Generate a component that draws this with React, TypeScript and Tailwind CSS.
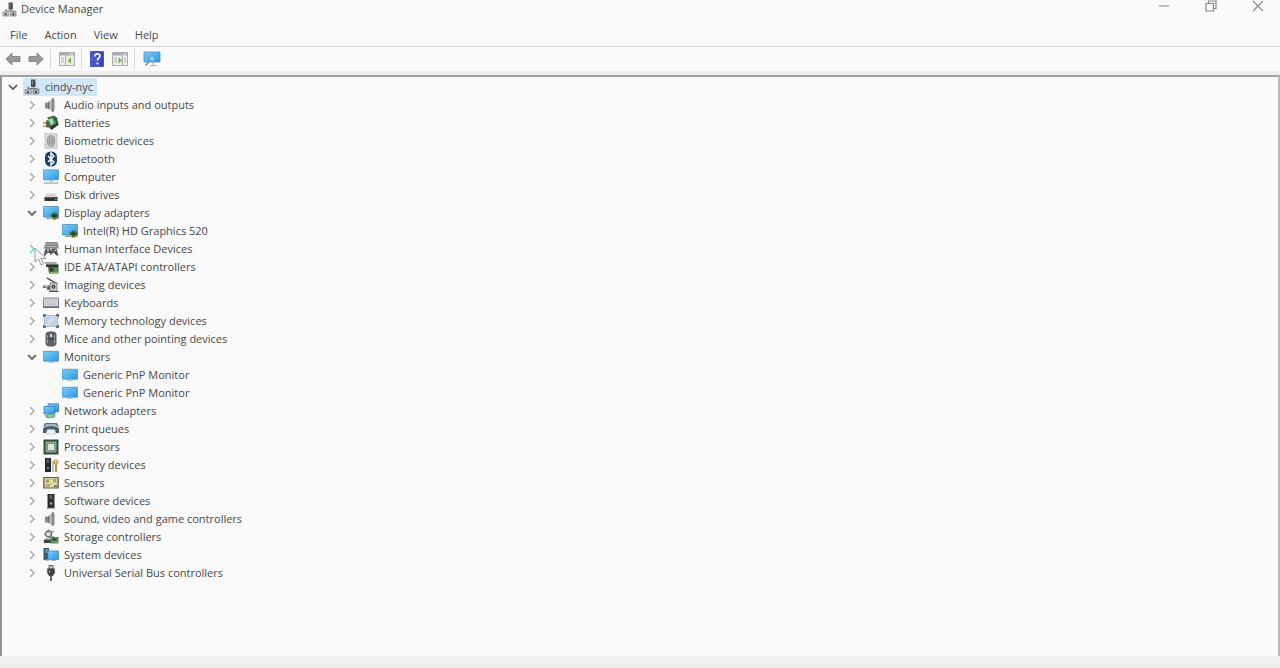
import { useState, type ReactNode } from "react";

function Icon({ children, className = "size-4" }: { children: ReactNode; className?: string }) {
  return (
    <svg viewBox="0 0 16 16" className={`${className} shrink-0`} fill="none" aria-hidden="true">
      {children}
    </svg>
  );
}

function Gradients() {
  return (
    <svg className="absolute size-0" aria-hidden="true">
      <defs>
        <linearGradient id="screen" x1="0" y1="0" x2="1" y2="1">
          <stop offset="0" stopColor="#86cbf4" />
          <stop offset="0.5" stopColor="#56b2ef" />
          <stop offset="1" stopColor="#2f93e0" />
        </linearGradient>
        <linearGradient id="metal" x1="0" y1="0" x2="1" y2="0">
          <stop offset="0" stopColor="#555" />
          <stop offset="0.5" stopColor="#c4c4c4" />
          <stop offset="1" stopColor="#777" />
        </linearGradient>
        <linearGradient id="help" x1="0" y1="0" x2="1" y2="0">
          <stop offset="0" stopColor="#2b3190" />
          <stop offset="0.3" stopColor="#4a58d0" />
          <stop offset="1" stopColor="#3642b4" />
        </linearGradient>
      </defs>
    </svg>
  );
}

function DeviceIcon({ className }: { className?: string }) {
  return (
    <Icon className={className}>
      <path d="M7 0.5h4.5V8H7z" fill="#454b4e" />
      <path d="M8 1.5h1v4H8z" fill="#79a09d" />
      <path d="M9.2 7v3M4 12V9.5h9V12" stroke="#777" strokeWidth="1" />
      <path d="M1 10.500h6.500V15H1z" fill="#b9bbbd" stroke="#8b8d90" strokeWidth=".7" />
      <path d="M9 10h6v5H9z" fill="#a7aaad" stroke="#85888b" strokeWidth=".7" />
      <path d="M3 12.2h2v2H3zM11 12h2v2h-2z" fill="#4a4d50" />
      <path d="M2.5 8.5 5 7v3z" fill="#999" />
    </Icon>
  );
}

function Speaker() {
  return (
    <Icon>
      <path d="M2 5.500h3.500v6H2z" fill="#8a8a8a" />
      <path d="M5 5.500 10 1v14l-5-3.500z" fill="url(#metal)" />
      <path d="M10 1c1.200 3 1.200 11 0 14" stroke="#777" strokeWidth="1.200" />
      <path d="M11.700 3v10" stroke="#c5c5c5" strokeWidth=".8" />
    </Icon>
  );
}

function Battery() {
  return (
    <Icon>
      <path d="m4 2.500 7-2 4 3-7 3z" fill="#555b55" />
      <path d="M3 5.500 12 2l3 7-7 5.500z" fill="#3f9a4c" />
      <path d="m5 4.500 4-1.500 2 5-3 2z" fill="#a5d9a6" />
      <path d="m11 3 2-.8 2.500 6-1.500 1.500z" fill="#2b4b32" />
      <path d="m6 12 9-4 .5 2-7 5z" fill="#333b35" />
      <path d="M0 7h4v1.500H0zM0 10.500h4V12H0z" fill="#d88a7c" />
      <path d="M2.500 6.500h4l1 6h-4z" fill="#586058" />
    </Icon>
  );
}

function Biometric() {
  return (
    <Icon>
      <path d="M2 .7h12v14.600H2z" fill="#d9dbdc" stroke="#b7babc" strokeWidth=".8" />
      <rect x="4.500" y="2.500" width="7" height="11" rx="3.500" fill="#b9bcbd" stroke="#888" strokeWidth=".8" />
      <path d="M6.200 11V6.200a1.800 1.800 0 0 1 3.600 0V11M8 6v6" stroke="#888" strokeWidth=".8" />
    </Icon>
  );
}

function Bluetooth() {
  return (
    <Icon>
      <rect x="2" y="0.500" width="12" height="15" rx="5.500" fill="#183f6b" />
      <path d="m5 5 6 6-3 3V2l3 3-6 6" stroke="#fff" strokeWidth="1.400" />
    </Icon>
  );
}

function Computer() {
  return (
    <Icon>
      <path d="M.5.800h15v10H.5z" fill="url(#screen)" stroke="#4a9cd6" strokeWidth=".8" />
      <path d="M6 11h4v1.500H6z" fill="#a6bfce" />
      <path d="M1 13.200h14V15H1z" fill="#b1b4b7" />
      <path d="M2 14h12" stroke="#e3e3e3" strokeWidth=".6" />
    </Icon>
  );
}

function Disk() {
  return (
    <Icon>
      <path d="M3.500 6.500h9l2 4h-13z" fill="#d5d5d5" />
      <path d="M1.500 10h13v4h-13z" fill="#303030" />
      <path d="M2.500 10.800h11" stroke="#777" strokeWidth=".7" />
      <path d="M12 12h1.500v1H12z" fill="#79a67b" />
    </Icon>
  );
}

function Display() {
  return (
    <Icon>
      <path d="M.5 1.500h15v10.500H.5z" fill="url(#screen)" stroke="#4a91bd" strokeWidth=".8" />
      <path d="M3 12.500h5V14H3z" fill="#899da8" />
      <path d="m7 10.500 4-3.500 4.500 2.500v4L11 15z" fill="#3f7045" />
      <path d="m9 10.500 2.500-1.500 2.500 1.500-2.500 2z" fill="#203d29" />
      <path d="M8 13 11 14.500l4-1.500" stroke="#b3a653" strokeWidth="1" />
    </Icon>
  );
}

function Monitor() {
  return (
    <Icon>
      <path d="M.5 2.300h15v9.900H.5z" fill="url(#screen)" stroke="#4395cf" strokeWidth=".8" />
      <path d="M5 12.600h6V14H5z" fill="#a9c0ce" />
    </Icon>
  );
}

function Hid() {
  return (
    <Icon>
      <path d="M3 1h11.500l1.500 6.500H.5z" fill="#85898b" />
      <path d="M3 3h11M2.500 5.500h12" stroke="#c5c7c8" strokeWidth=".9" strokeDasharray="1.500 .8" />
      <path d="M.5 14.500 2.500 7.500h4.500l1 2.500 1-2.500h4.500l2 7h-2l-2.500-2.500H9.500L8 14.500 6.500 12H4l-1.500 2.500z" fill="#55595b" />
      <path d="M4 9h2M5 8v3M11 9.500h2" stroke="#ddd" strokeWidth=".8" />
    </Icon>
  );
}

function Ide() {
  return (
    <Icon>
      <path d="M1 3h12l2 3H3z" fill="#aaa" />
      <path d="M3 5.500h12.500V8H3z" fill="#333" />
      <path d="M5 8h10.500v6.500H6z" fill="#397446" />
      <path d="M7 9.500h3V12H7z" fill="#20392a" />
      <path d="M11.500 10h2.500M11.500 12h2.500M7 13.500h8" stroke="#a9bc67" strokeWidth=".8" />
    </Icon>
  );
}

function Imaging() {
  return (
    <Icon>
      <path d="m4 1 10.500 6" stroke="#333" strokeWidth="1.400" />
      <path d="M7 6h7v8H7z" fill="#c8cacc" stroke="#73777a" strokeWidth=".8" />
      <path d="M0 8.500h7V13H4v-2H0z" fill="#666" />
      <path d="M1.500 9.700H5" stroke="#ddd" strokeWidth=".9" />
      <circle cx="10.500" cy="9.800" r="2" fill="#444" />
      <circle cx="10.500" cy="9.800" r=".7" fill="#bbb" />
      <path d="M6 14.500h9.500" stroke="#555" strokeWidth="1" />
    </Icon>
  );
}

function Keyboard() {
  return (
    <Icon>
      <path d="M.5 3h15v9.500H.5z" fill="#d5d7db" stroke="#83858a" />
      <path d="M2 5.200h12M2 7.200h12" stroke="#b4b7bd" strokeWidth=".8" strokeDasharray="1.300 .5" />
      <path d="M2 9.200h12" stroke="#babcc2" strokeWidth="1" />
      <path d="M0 12h16" stroke="#595b60" strokeWidth="1.300" />
    </Icon>
  );
}

function Memory() {
  return (
    <Icon>
      <path d="M1.500 2.500h13v11h-13z" fill="#c0d2e3" stroke="#9ba7b1" strokeDasharray="2 1" />
      <path d="M.7 4V2H3M13 2h2.300v2M15.300 12v2H13M3 14H.7v-2" stroke="#444c53" strokeWidth="1.300" />
      <path d="m3 11.500 7-8h3l-7 8z" fill="#d3e1ed" />
    </Icon>
  );
}

function Mouse() {
  return (
    <Icon>
      <rect x="2.500" y=".5" width="11" height="15" rx="4" fill="#5b6066" />
      <path d="M4.500 4v8M11.500 4v8" stroke="#9ca1a7" strokeWidth="1" />
      <path d="M8 1v6M4 8h8" stroke="#25282b" strokeWidth=".8" />
      <rect x="7" y="2.500" width="2" height="4" rx="1" fill="#d5d7d9" />
    </Icon>
  );
}

function Network() {
  return (
    <Icon>
      <path d="M5 .8h10.500v8H5z" fill="url(#screen)" stroke="#3d82b4" strokeWidth=".8" />
      <path d="M1 3.500h11v7.500H1z" fill="url(#screen)" stroke="#3d82b4" strokeWidth=".8" />
      <path d="m1.500 12.500 4-1.500h5l2.500 2-3 2.200H4z" fill="#6ab58b" />
      <path d="M5 13h5" stroke="#b8dfc9" />
    </Icon>
  );
}

function Printer() {
  return (
    <Icon>
      <path d="M2 2h12l2 3.500H0z" fill="#6a7377" />
      <path d="M3 3.300h10L14.500 7h-13z" fill="#a5c7cf" />
      <path d="M0 7.500c3-3.500 13-3.500 16 0V12h-3l-2-3H5l-2 3H0z" fill="#4a5f65" />
      <path d="M4.500 8.500h7L13 13H3z" fill="#edf1f3" stroke="#b0b8bb" strokeWidth=".6" />
    </Icon>
  );
}

function Processor() {
  return (
    <Icon>
      <path d="M1.500 1.500h13v13h-13z" fill="#8fa793" stroke="#324e3a" strokeWidth="2" />
      <path d="M4.300 4.300h7.400v7.400H4.300z" fill="#dfe4dc" stroke="#718a76" />
    </Icon>
  );
}

function Security() {
  return (
    <Icon>
      <path d="M2 1h6v14H2z" fill="#25282a" />
      <path d="M3.500 3h2.500M3.500 5h2.500" stroke="#8c9193" />
      <circle cx="5" cy="11" r="1" fill="#80a5b8" />
      <path d="M8.800 4h2v11h-2z" fill="#bbb" />
      <circle cx="12.800" cy="5" r="2.700" fill="#d7a664" />
      <path d="M12 7h2v8h-2z" fill="#c18c42" />
      <circle cx="12.800" cy="4.300" r=".7" fill="#fff" />
    </Icon>
  );
}

function Sensor() {
  return (
    <Icon>
      <path d="M.8 2.500h14.400V13H.8z" fill="#d2cf93" stroke="#5b5d4b" strokeWidth="1.200" />
      <path d="M3 4.500h3v3H3zM10 4h3v3h-3zM3 9.500h4v2H3z" fill="#a5a272" />
      <path d="m6 8 3-3 2 5 3-2M7 12l3-2" stroke="#f3efc1" />
      <path d="M11 10h3v2h-3z" fill="#777" />
    </Icon>
  );
}

function Software() {
  return (
    <Icon>
      <path d="M4.500 1h7v14h-7z" fill="#292b2c" />
      <path d="M6.500 3h3M6.500 5h3" stroke="#999" strokeWidth="1" />
      <circle cx="8" cy="10.500" r="1.200" fill="#9fb7b8" />
      <path d="M4 15h8" stroke="#666" />
    </Icon>
  );
}

function Storage() {
  return (
    <Icon>
      <circle cx="5.500" cy="5" r="3" fill="#d8dddb" stroke="#5b6661" strokeWidth="1.300" />
      <path d="m5.500.5 1 2M1 5h2M9 3l2-1M9 7l2 1" stroke="#697470" />
      <path d="m.5 11 3-2H11v3H.5z" fill="#aeb9b1" />
      <path d="M1 10.700h9V14H1z" fill="#39463e" />
      <path d="M7.500 8h8v6.500h-8z" fill="#4d8254" />
      <path d="M10 9.500h2.500v2H10z" fill="#243f2a" />
      <path d="M9 13h6" stroke="#b0b86d" strokeWidth=".8" />
    </Icon>
  );
}

function System() {
  return (
    <Icon>
      <path d="M.5 1h5.500v12H.5z" fill="#3c566a" />
      <path d="M2 3h3M2 5h3" stroke="#9bb9cd" />
      <path d="M5 4h10.500v8.500H5z" fill="url(#screen)" stroke="#328bcb" strokeWidth=".8" />
      <path d="M2 12.500h4V14H2zM8 13h5v1H8z" fill="#a9bbc7" />
    </Icon>
  );
}

function Usb() {
  return (
    <Icon>
      <path d="M6 .5h4V4H6z" fill="#c9c9c9" stroke="#666" strokeWidth="1" />
      <path d="M4.200 3.500h7.600V8L9.800 11H6.200l-2-3z" fill="#424242" />
      <path d="M6 5h1v3H6z" fill="#999" />
      <path d="M8 10v6" stroke="#555" strokeWidth="1.800" />
    </Icon>
  );
}

type Device = { name: string; icon: ReactNode; children?: { name: string; icon: ReactNode }[] };

const devices: Device[] = [
  { name: "Audio inputs and outputs", icon: <Speaker /> },
  { name: "Batteries", icon: <Battery /> },
  { name: "Biometric devices", icon: <Biometric /> },
  { name: "Bluetooth", icon: <Bluetooth /> },
  { name: "Computer", icon: <Computer /> },
  { name: "Disk drives", icon: <Disk /> },
  { name: "Display adapters", icon: <Display />, children: [{ name: "Intel(R) HD Graphics 520", icon: <Display /> }] },
  { name: "Human Interface Devices", icon: <Hid /> },
  { name: "IDE ATA/ATAPI controllers", icon: <Ide /> },
  { name: "Imaging devices", icon: <Imaging /> },
  { name: "Keyboards", icon: <Keyboard /> },
  { name: "Memory technology devices", icon: <Memory /> },
  { name: "Mice and other pointing devices", icon: <Mouse /> },
  {
    name: "Monitors",
    icon: <Monitor />,
    children: [
      { name: "Generic PnP Monitor", icon: <Monitor /> },
      { name: "Generic PnP Monitor", icon: <Monitor /> },
    ],
  },
  { name: "Network adapters", icon: <Network /> },
  { name: "Print queues", icon: <Printer /> },
  { name: "Processors", icon: <Processor /> },
  { name: "Security devices", icon: <Security /> },
  { name: "Sensors", icon: <Sensor /> },
  { name: "Software devices", icon: <Software /> },
  { name: "Sound, video and game controllers", icon: <Speaker /> },
  { name: "Storage controllers", icon: <Storage /> },
  { name: "System devices", icon: <System /> },
  { name: "Universal Serial Bus controllers", icon: <Usb /> },
];

function Toggle({ open, hot, label, onClick }: { open: boolean; hot?: boolean; label: string; onClick: () => void }) {
  return (
    <button
      type="button"
      aria-label={label}
      aria-expanded={open}
      onClick={onClick}
      className="flex size-4 shrink-0 items-center justify-center"
    >
      <svg viewBox="0 0 12 12" className="size-3" fill="none" aria-hidden="true">
        {open ? (
          <path d="m2 4 4 4 4-4" stroke="#555" strokeWidth="1.700" />
        ) : (
          <path d="m4 2 4 4-4 4" stroke={hot ? "#5fd0e4" : "#a8a8a8"} strokeWidth="1.400" />
        )}
      </svg>
    </button>
  );
}

function Pointer() {
  return (
    <svg viewBox="0 0 14 20" className="pointer-events-none absolute top-1.5 left-2.5 z-10 h-5 w-3.5" aria-hidden="true">
      <path d="M1 1v14l3.500-3 2.500 6 2.500-1-2.500-5.500H12z" fill="#fafafa" stroke="#999" strokeWidth="1" />
    </svg>
  );
}

function PanelIcon({ side }: { side: "left" | "right" }) {
  return (
    <svg viewBox="0 0 16 14" className="h-3.5 w-4" fill="none" aria-hidden="true">
      <path d="M.5.500h15v13H.5z" fill="#f1f1ef" stroke="#aaadb0" />
      <path d="M1 1h14v2.500H1z" fill="#a6abb0" />
      <path d="M11 2h3" stroke="#eee" />
      {side === "left" ? (
        <>
          <path d="M6.500 4v9" stroke="#aaa" />
          <path d="M2 6h3M2 8h3M2 10h3" stroke="#b0b4b8" />
          <path d="M8 5h6v7H8z" fill="#e0ebd0" />
          <path d="M12 5.500v6L8.700 8.500z" fill="#78ad50" />
        </>
      ) : (
        <>
          <path d="M10.500 4v9" stroke="#aaa" />
          <path d="M2 6h3M2 8h3M2 10h3M12 6h2M12 8h2M12 10h2" stroke="#b0b4b8" />
          <path d="M6 5h4v7H6z" fill="#e0ebd0" />
          <path d="M6.500 5.500v6l3.300-3z" fill="#78ad50" />
        </>
      )}
    </svg>
  );
}

function Arrow({ direction }: { direction: "back" | "forward" }) {
  return (
    <svg viewBox="0 0 16 14" className="h-3.5 w-4" aria-hidden="true">
      <path
        d={direction === "back" ? "M.8 7 7 1v3.500h8v5H7V13z" : "M15.200 7 9 1v3.500H1v5h8V13z"}
        fill="#999"
        stroke="#858585"
        strokeWidth=".9"
      />
    </svg>
  );
}

function Separator() {
  return <div className="h-5 w-px bg-[#d8d8d8]" />;
}

export default function App() {
  const [rootOpen, setRootOpen] = useState(true);
  const [open, setOpen] = useState<string[]>(["Display adapters", "Monitors"]);
  const toggle = (name: string) =>
    setOpen((names) => (names.includes(name) ? names.filter((n) => n !== name) : [...names, name]));

  return (
    <div className="flex min-h-screen flex-col bg-[#fafafa] font-['Open_Sans','Noto_Sans',sans-serif] text-[11px] leading-4 text-[#484848]">
      <Gradients />
      <header className="flex h-6 items-start justify-between">
        <div className="flex items-center gap-1 pl-0.5">
          <DeviceIcon className="size-[15px]" />
          <h1 className="text-[11px] leading-[18px]">Device Manager</h1>
        </div>
        <div className="flex gap-[31px] pr-3.5">
          <button type="button" aria-label="Minimize" className="flex h-3 w-4 items-center justify-center">
            <svg viewBox="0 0 12 12" className="size-3" aria-hidden="true">
              <path d="M1 6h10" stroke="#999" strokeWidth="1.200" />
            </svg>
          </button>
          <button type="button" aria-label="Restore" className="flex h-3 w-4 items-center justify-center">
            <svg viewBox="0 0 12 12" className="size-3" fill="none" aria-hidden="true">
              <path d="M1 3.500h7.500V11H1z" stroke="#8a8a8a" strokeWidth="1.200" />
              <path d="M3.500 3V1H11v7.500H9" stroke="#8a8a8a" strokeWidth="1.200" />
            </svg>
          </button>
          <button type="button" aria-label="Close" className="flex h-3 w-4 items-center justify-center">
            <svg viewBox="0 0 12 12" className="size-3" aria-hidden="true">
              <path d="m1 1 10 10M11 1 1 11" stroke="#8a8a8a" strokeWidth="1.200" />
            </svg>
          </button>
        </div>
      </header>

      <nav className="flex h-[23px] items-center gap-[17px] border-b border-[#d4d4d4] pl-2.5" aria-label="Menu">
        <button type="button">File</button>
        <button type="button">Action</button>
        <button type="button">View</button>
        <button type="button">Help</button>
      </nav>

      <div className="flex h-6 items-center pl-[5px]" role="toolbar" aria-label="Tools">
        <button type="button" aria-label="Back" className="mr-[7px]"><Arrow direction="back" /></button>
        <button type="button" aria-label="Forward" className="mr-1.5"><Arrow direction="forward" /></button>
        <Separator />
        <button type="button" aria-label="Show console tree" className="mr-1.5 ml-2"><PanelIcon side="left" /></button>
        <Separator />
        <button type="button" aria-label="Help topics" className="mx-2">
          <svg viewBox="0 0 14 16" className="h-4 w-3.5" fill="none" aria-hidden="true">
            <path d="M.5.500h13v15H.5z" fill="url(#help)" stroke="#5059a6" />
            <path d="M2 1v14" stroke="#8089dc" strokeWidth=".8" />
            <path d="M5 5.500c0-3.500 5-3.500 5-.5C10 7 7.500 7 7.500 9.500" stroke="#fff" strokeWidth="1.700" />
            <circle cx="7.500" cy="12.500" r="1.100" fill="#fff" />
          </svg>
        </button>
        <button type="button" aria-label="Show action pane" className="mr-1.5"><PanelIcon side="right" /></button>
        <Separator />
        <button type="button" aria-label="Scan for hardware changes" className="mx-2">
          <svg viewBox="0 0 18 16" className="h-4 w-[18px]" fill="none" aria-hidden="true">
            <path d="M1 1h16v10H1z" fill="url(#screen)" stroke="#4a91bd" strokeWidth=".8" />
            <path d="M10 11v3M7 14.500h7" stroke="#a5b6c1" strokeWidth="1.200" />
            <circle cx="9" cy="7.500" r="2.800" fill="#8fcdf2" stroke="#4f9fce" />
            <path d="m6.800 9.800-4.300 4.700" stroke="#7e95a3" strokeWidth="1.700" />
          </svg>
        </button>
      </div>
      <div className="h-1 bg-[#eeeeee]" />

      <main className="flex-1 border-t-2 border-r-2 border-l-2 border-t-[#a0a0a0] border-r-[#b8b8b8] border-l-[#929292] bg-[#fafafa] pt-px">
        <ul aria-label="Devices">
          <li>
            <div className="flex h-[18px] items-center pl-[3px]">
              <Toggle open={rootOpen} label="Toggle cindy-nyc" onClick={() => setRootOpen(!rootOpen)} />
              <div className="ml-0.5 flex h-[18px] items-center gap-[5px] bg-[#d3e6f8] pr-1 pl-px">
                <DeviceIcon className="size-4" />
                <span>cindy-nyc</span>
              </div>
            </div>
            {rootOpen && (
              <ul>
                {devices.map((device) => {
                  const expanded = open.includes(device.name);
                  const hot = device.name === "Human Interface Devices";
                  return (
                    <li key={device.name}>
                      <div className="flex h-[18px] items-center pl-[22px]">
                        <div className="relative mr-[3px] flex">
                          <Toggle open={expanded} hot={hot} label={`Toggle ${device.name}`} onClick={() => toggle(device.name)} />
                          {hot && <Pointer />}
                        </div>
                        {device.icon}
                        <span className="ml-[5px] whitespace-nowrap">{device.name}</span>
                      </div>
                      {expanded && device.children && (
                        <ul>
                          {device.children.map((child, index) => (
                            <li key={index} className="flex h-[18px] items-center gap-[5px] pl-[60px]">
                              {child.icon}
                              <span className="whitespace-nowrap">{child.name}</span>
                            </li>
                          ))}
                        </ul>
                      )}
                    </li>
                  );
                })}
              </ul>
            )}
          </li>
        </ul>
      </main>
      <footer className="h-3 border-t border-[#f4f4f4] bg-[#eeeeef]" />
    </div>
  );
}
